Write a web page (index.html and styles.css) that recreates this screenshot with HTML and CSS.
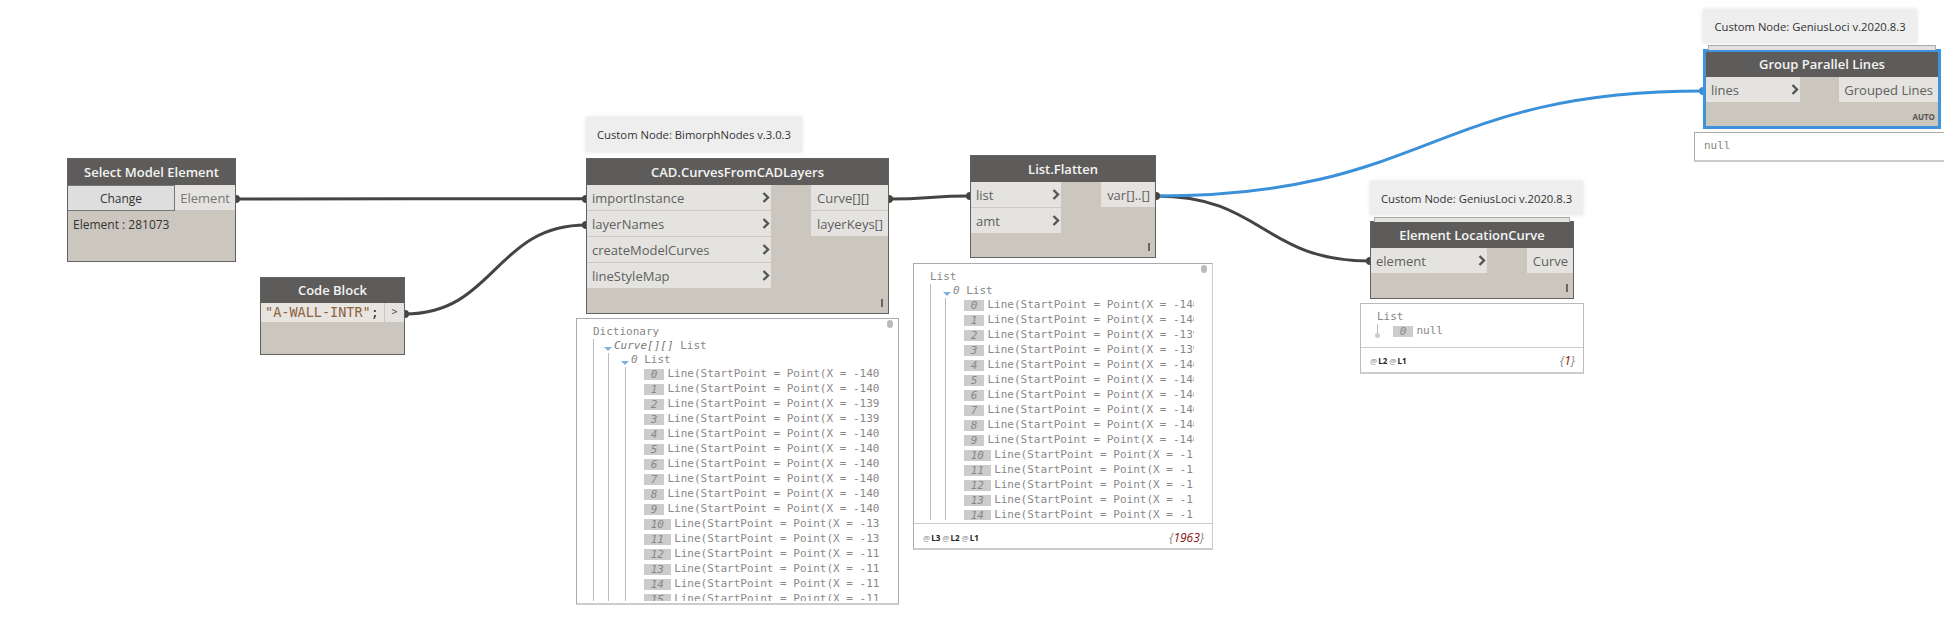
FILE: index.html
```html
<!DOCTYPE html>
<html lang="en">
<head>
<meta charset="utf-8">
<title>Dynamo graph</title>
<link rel="stylesheet" href="styles.css">
</head>
<body>
<main class="canvas">
  <svg class="wires" width="1944" height="634" viewBox="0 0 1944 634">
    <g class="wire">
      <path d="M236 199 C411 199 411 198.7 586 198.7"/>
      <path d="M405 314 C495 314 495 225 586 225"/>
      <path d="M889 199 C930 199 930 196 970 196"/>
      <path d="M1156 196 C1263 196 1263 261 1370 261"/>
    </g>
    <path class="wire-sel" d="M1156 196 C1430 196 1430 91 1703 91"/>
    <g class="dots">
      <circle cx="236" cy="199" r="4"/><circle cx="586" cy="199" r="4"/>
      <circle cx="405" cy="314" r="4"/><circle cx="586" cy="225" r="4"/>
      <circle cx="889" cy="199" r="4"/><circle cx="970" cy="196" r="4"/>
      <circle cx="1156" cy="196" r="4"/><circle cx="1370" cy="261" r="4"/>
    </g>
    <circle class="dot-sel" cx="1703" cy="91" r="4"/>
  </svg>

  <!-- Select Model Element -->
  <section class="node n-select">
    <h2 class="head">Select Model Element</h2>
    <div class="ports-select">
      <button class="change">Change</button>
      <span class="port out">Element</span>
    </div>
    <p class="value">Element : 281073</p>
  </section>

  <!-- Code Block -->
  <section class="node n-code">
    <h2 class="head h-code">Code Block</h2>
    <div class="code-row">
      <code class="code"><span class="str">"A-WALL-INTR"</span>;</code>
      <span class="code-out">&gt;</span>
    </div>
  </section>

  <!-- CAD.CurvesFromCADLayers -->
  <aside class="tip t-cad">Custom Node: BimorphNodes v.3.0.3</aside>
  <section class="node n-cad">
    <h2 class="head">CAD.CurvesFromCADLayers</h2>
    <div class="ports">
      <div class="col-in">
        <div class="port in">importInstance<svg class="chev" width="8" height="11" viewBox="0 0 8 11"><path d="M1.5 1 L6 5.5 L1.5 10"/></svg></div>
        <div class="port in">layerNames<svg class="chev" width="8" height="11" viewBox="0 0 8 11"><path d="M1.5 1 L6 5.5 L1.5 10"/></svg></div>
        <div class="port in">createModelCurves<svg class="chev" width="8" height="11" viewBox="0 0 8 11"><path d="M1.5 1 L6 5.5 L1.5 10"/></svg></div>
        <div class="port in">lineStyleMap<svg class="chev" width="8" height="11" viewBox="0 0 8 11"><path d="M1.5 1 L6 5.5 L1.5 10"/></svg></div>
      </div>
      <div class="col-out">
        <div class="port out">Curve[][]</div>
        <div class="port out">layerKeys[]</div>
      </div>
    </div>
    <div class="foot"><i class="lacing"></i></div>
  </section>
  <section class="watch w-cad">
    <div class="view">
      <div class="label">Dictionary</div>
      <div class="branch">
        <div class="label l1"><i class="arrow"></i><em class="key">Curve[][]</em>&nbsp;List</div>
        <div class="branch b2">
          <div class="label l2"><i class="arrow"></i><em class="key">0</em>&nbsp;List</div>
          <div class="branch b3">
            <div class="row"><b class="idx">0</b>Line(StartPoint = Point(X = -140.2561, Y = 12</div>
            <div class="row"><b class="idx">1</b>Line(StartPoint = Point(X = -140.2561, Y = 12</div>
            <div class="row"><b class="idx">2</b>Line(StartPoint = Point(X = -139.2561, Y = 12</div>
            <div class="row"><b class="idx">3</b>Line(StartPoint = Point(X = -139.2561, Y = 12</div>
            <div class="row"><b class="idx">4</b>Line(StartPoint = Point(X = -140.2561, Y = 12</div>
            <div class="row"><b class="idx">5</b>Line(StartPoint = Point(X = -140.2561, Y = 12</div>
            <div class="row"><b class="idx">6</b>Line(StartPoint = Point(X = -140.2561, Y = 12</div>
            <div class="row"><b class="idx">7</b>Line(StartPoint = Point(X = -140.2561, Y = 12</div>
            <div class="row"><b class="idx">8</b>Line(StartPoint = Point(X = -140.2561, Y = 12</div>
            <div class="row"><b class="idx">9</b>Line(StartPoint = Point(X = -140.2561, Y = 12</div>
            <div class="row"><b class="idx">10</b>Line(StartPoint = Point(X = -139.2561, Y = 12</div>
            <div class="row"><b class="idx">11</b>Line(StartPoint = Point(X = -139.2561, Y = 12</div>
            <div class="row"><b class="idx">12</b>Line(StartPoint = Point(X = -119.2561, Y = 12</div>
            <div class="row"><b class="idx">13</b>Line(StartPoint = Point(X = -119.2561, Y = 12</div>
            <div class="row"><b class="idx">14</b>Line(StartPoint = Point(X = -110.2561, Y = 12</div>
            <div class="row"><b class="idx">15</b>Line(StartPoint = Point(X = -110.2561, Y = 12</div>
            <div class="row"><b class="idx">16</b>Line(StartPoint = Point(X = -110.2561, Y = 12</div>
          </div>
        </div>
      </div>
    </div>
    <i class="thumb"></i>
  </section>

  <!-- List.Flatten -->
  <section class="node n-flat">
    <h2 class="head">List.Flatten</h2>
    <div class="ports">
      <div class="col-in">
        <div class="port in">list<svg class="chev" width="8" height="11" viewBox="0 0 8 11"><path d="M1.5 1 L6 5.5 L1.5 10"/></svg></div>
        <div class="port in">amt<svg class="chev" width="8" height="11" viewBox="0 0 8 11"><path d="M1.5 1 L6 5.5 L1.5 10"/></svg></div>
      </div>
      <div class="col-out">
        <div class="port out">var[]..[]</div>
      </div>
    </div>
    <div class="foot"><i class="lacing"></i></div>
  </section>
  <section class="watch w-flat">
    <div class="view">
      <div class="label">List</div>
      <div class="branch">
        <div class="label l2"><i class="arrow"></i><em class="key">0</em>&nbsp;List</div>
        <div class="branch">
          <div class="row"><b class="idx">0</b>Line(StartPoint = Point(X = -140.2561, Y = 12</div>
          <div class="row"><b class="idx">1</b>Line(StartPoint = Point(X = -140.2561, Y = 12</div>
          <div class="row"><b class="idx">2</b>Line(StartPoint = Point(X = -139.2561, Y = 12</div>
          <div class="row"><b class="idx">3</b>Line(StartPoint = Point(X = -139.2561, Y = 12</div>
          <div class="row"><b class="idx">4</b>Line(StartPoint = Point(X = -140.2561, Y = 12</div>
          <div class="row"><b class="idx">5</b>Line(StartPoint = Point(X = -140.2561, Y = 12</div>
          <div class="row"><b class="idx">6</b>Line(StartPoint = Point(X = -140.2561, Y = 12</div>
          <div class="row"><b class="idx">7</b>Line(StartPoint = Point(X = -140.2561, Y = 12</div>
          <div class="row"><b class="idx">8</b>Line(StartPoint = Point(X = -140.2561, Y = 12</div>
          <div class="row"><b class="idx">9</b>Line(StartPoint = Point(X = -140.2561, Y = 12</div>
          <div class="row"><b class="idx">10</b>Line(StartPoint = Point(X = -119.2561, Y = 12</div>
          <div class="row"><b class="idx">11</b>Line(StartPoint = Point(X = -119.2561, Y = 12</div>
          <div class="row"><b class="idx">12</b>Line(StartPoint = Point(X = -119.2561, Y = 12</div>
          <div class="row"><b class="idx">13</b>Line(StartPoint = Point(X = -119.2561, Y = 12</div>
          <div class="row"><b class="idx">14</b>Line(StartPoint = Point(X = -119.2561, Y = 12</div>
          <div class="row"><b class="idx">15</b>Line(StartPoint = Point(X = -119.2561, Y = 12</div>
        </div>
      </div>
    </div>
    <footer class="w-foot">
      <span class="levels"><span><s>@</s>L3</span><span><s>@</s>L2</span><span><s>@</s>L1</span></span>
      <span class="count">{<b>1963</b>}</span>
    </footer>
    <i class="thumb"></i>
  </section>

  <!-- Element LocationCurve -->
  <aside class="tip t-elem">Custom Node: GeniusLoci v.2020.8.3</aside>
  <section class="node n-elem stacked">
    <h2 class="head">Element LocationCurve</h2>
    <div class="ports">
      <div class="col-in">
        <div class="port in">element<svg class="chev" width="8" height="11" viewBox="0 0 8 11"><path d="M1.5 1 L6 5.5 L1.5 10"/></svg></div>
      </div>
      <div class="col-out">
        <div class="port out">Curve</div>
      </div>
    </div>
    <div class="foot"><i class="lacing"></i></div>
  </section>
  <section class="watch w-elem">
    <div class="view">
      <div class="label">List</div>
      <div class="tick-row"><i class="tick"></i><div class="row"><b class="idx">0</b>null</div></div>
    </div>
    <footer class="w-foot">
      <span class="levels"><span><s>@</s>L2</span><span><s>@</s>L1</span></span>
      <span class="count">{<b>1</b>}</span>
    </footer>
  </section>

  <!-- Group Parallel Lines -->
  <aside class="tip t-group">Custom Node: GeniusLoci v.2020.8.3</aside>
  <section class="node n-group stacked">
    <h2 class="head">Group Parallel Lines</h2>
    <div class="ports">
      <div class="col-in">
        <div class="port in">lines<svg class="chev" width="8" height="11" viewBox="0 0 8 11"><path d="M1.5 1 L6 5.5 L1.5 10"/></svg></div>
      </div>
      <div class="col-out">
        <div class="port out">Grouped Lines</div>
      </div>
    </div>
    <div class="foot"><span class="auto">AUTO</span></div>
  </section>
  <section class="watch w-null">
    <div class="view"><div class="label">null</div></div>
  </section>
</main>
</body>
</html>
```
FILE: styles.css
```css
* { box-sizing: border-box; }
html, body { margin: 0; padding: 0; background: #fff; }
body { width: 1944px; height: 634px; overflow: hidden; font-family: "Open Sans", "Liberation Sans", sans-serif; }

.canvas { position: relative; width: 1944px; height: 634px; overflow: hidden; }

.wires { position: absolute; left: 0; top: 0; }
.wire path { fill: none; stroke: #444; stroke-width: 3; }
.wire-sel { fill: none; stroke: #3b90da; stroke-width: 3; }
.dots circle { fill: #444; }
.dot-sel { fill: #3b90da; }

/* nodes */
.node { position: absolute; display: flex; flex-direction: column; background: #cbc6be; border: 1px solid #646260; }
.n-select { left: 67px; top: 158px; width: 169px; height: 104px; }
.n-code { left: 260px; top: 277px; width: 145px; height: 78px; }
.n-cad { left: 586px; top: 158px; width: 303px; height: 156px; }
.n-flat { left: 970px; top: 155px; width: 186px; height: 103px; }
.n-elem { left: 1370px; top: 221px; width: 204px; height: 78px; }
.n-group { left: 1703px; top: 49px; width: 238px; height: 80px; border: 3px solid #3f92dc; }

.stacked::before { content: ""; position: absolute; left: 3px; right: 3px; top: -5px; height: 4px; background: #e3e2df; border: 1px solid #aaa; border-bottom: 0; }
.n-group::before { left: 2px; right: 2px; top: -7px; }

.head { flex: none; height: 26px; margin: 0; background: #5e5c5a; color: #f4f4f4; font-size: 13px; font-weight: 600; line-height: 26px; text-align: center; white-space: nowrap; }
.h-code { height: 25px; line-height: 25px; }
.n-group .head { height: 25px; line-height: 25px; }

.ports { display: flex; justify-content: space-between; align-items: flex-start; }
.col-in { display: flex; flex-direction: column; }
.col-out { display: flex; flex-direction: column; }
.n-cad .col-in { width: 184px; }
.n-cad .col-out { width: 77px; }
.n-flat .col-in { width: 90px; }
.n-flat .col-out { width: 54px; }
.n-elem .col-in { width: 116px; }
.n-elem .col-out { width: 46px; }
.n-group .col-in { width: 94px; }
.n-group .col-out { width: 99px; }

.port { display: flex; align-items: center; height: 26px; background: #e4e3df; color: #5f5f5f; font-size: 13px; white-space: nowrap; border-bottom: 1px solid #cbcac6; }
.port:last-child { border-bottom: 0; height: 25px; }
.port.in { justify-content: space-between; padding: 0 1px 0 5px; }
.port.out { justify-content: flex-end; padding-right: 5px; }
.n-cad .port.out { justify-content: flex-start; padding: 0 0 0 6px; }
.chev { flex: none; }
.chev path { fill: none; stroke: #555; stroke-width: 2.4; }

.foot { flex: 1; position: relative; display: flex; justify-content: flex-end; align-items: flex-end; padding: 0 5px 6px 0; }
.lacing { display: block; width: 2px; height: 8px; background: #666; }
.auto { font-size: 8px; font-weight: 700; color: #555; line-height: 8px; position: relative; left: 2px; top: 1px; }

.ports-select { display: flex; height: 26px; flex: none; }
.change { width: 107px; height: 26px; margin: 0; padding: 0; background: #dedede; border: 1px solid #777; border-left: 0; color: #333; font: 12px "Open Sans", sans-serif; }
.ports-select .port { flex: 1; border: 0; height: 25px; color: #777; }
.value { margin: 0; padding: 5px 5px; color: #333; font-size: 12px; line-height: 18px; }

.code-row { display: flex; height: 19px; flex: none; }
.code { flex: 1; background: #e8e4e0; color: #333; font: 13.5px/19px "DejaVu Sans Mono", monospace; padding-left: 4px; white-space: nowrap; overflow: hidden; }
.str { color: #8a623f; }
.code-out { width: 19px; margin-left: 1px; background: #e4e3df; color: #555; font: 10px/18px "DejaVu Sans Mono", monospace; text-align: center; }

/* tooltips */
.tip { position: absolute; display: flex; align-items: center; justify-content: center; background: #eeeeee; color: #333; font-size: 11.25px; box-shadow: 0 0 4px rgba(0,0,0,.12); white-space: nowrap; }
.t-cad { left: 586px; top: 117px; width: 216px; height: 35px; }
.t-elem { left: 1370px; top: 181px; width: 213px; height: 34px; }
.t-group { left: 1703px; top: 9px; width: 214px; height: 34px; }

/* watches */
.watch { position: absolute; display: flex; flex-direction: column; background: #fff; border: 1px solid #aaa; border-bottom: 2px solid #ccc; color: #888; font: 11px "DejaVu Sans Mono", monospace; }
.w-cad { left: 576px; top: 318px; width: 323px; height: 287px; }
.w-flat { left: 913px; top: 263px; width: 300px; height: 287px; border-color: #ccc; border-top-color: #aaa; border-left-color: #aaa; }
.w-elem { left: 1360px; top: 303px; width: 224px; height: 71px; border-color: #bbb; border-bottom-color: #ccc; }
.w-null { left: 1694px; top: 132px; width: 270px; height: 30px; }

.view { flex: 1; min-height: 0; overflow: hidden; padding: 6px 0 0 16px; white-space: nowrap; }
.w-cad .view { margin: 0 18px 2px 0; }
.w-flat .view { margin: 0 18px 3px 0; }
.w-null .view { padding: 6px 0 0 9px; }

.label { display: flex; align-items: center; height: 14px; line-height: 14px; }
.l1 { padding-left: 10px; }
.l2 { padding-left: 12px; }
.key { font-style: italic; }
.l1 .key { color: #777; }
.arrow { flex: none; width: 0; height: 0; margin: 5px 2px 0 0; border-left: 4px solid transparent; border-right: 4px solid transparent; border-top: 4px solid #7eb0df; }

.branch { border-left: 1px solid #bbb; }
.branch .branch { margin-left: 14px; }
.branch .b3 { margin-left: 16px; }
.row { display: flex; align-items: center; height: 15px; padding: 0 0 1px 18px; line-height: 14px; }
.idx { flex: none; height: 11px; margin-right: 3.5px; padding: 0 6.7px; background: #ccc; color: #888; font-weight: 400; font-style: italic; line-height: 11px; }

.tick-row { position: relative; }
.tick-row .row { padding-left: 16px; }
.tick { position: absolute; left: 0; top: 0; width: 1px; height: 11px; background: #bbb; }
.tick::after { content: ""; position: absolute; left: -2px; bottom: -3px; width: 5px; height: 5px; border-radius: 50%; background: #ccc; }

.w-foot { flex: none; display: flex; justify-content: space-between; align-items: center; height: 25px; border-top: 1px solid #ccc; padding: 0 8px 0 9px; font-family: "Open Sans", sans-serif; }
.w-flat .w-foot { padding-top: 2px; }
.levels { display: flex; gap: 2px; color: #222; font-size: 8px; font-weight: 700; }
.levels s { margin-right: 1px; color: #888; font-weight: 400; text-decoration: none; }
.count { color: #888; font-size: 12px; font-style: italic; }
.count b { color: #8b1010; font-weight: 400; }

.thumb { position: absolute; right: 5px; top: 1px; width: 6px; height: 8px; border-radius: 3px; background: #bbb; }
```
